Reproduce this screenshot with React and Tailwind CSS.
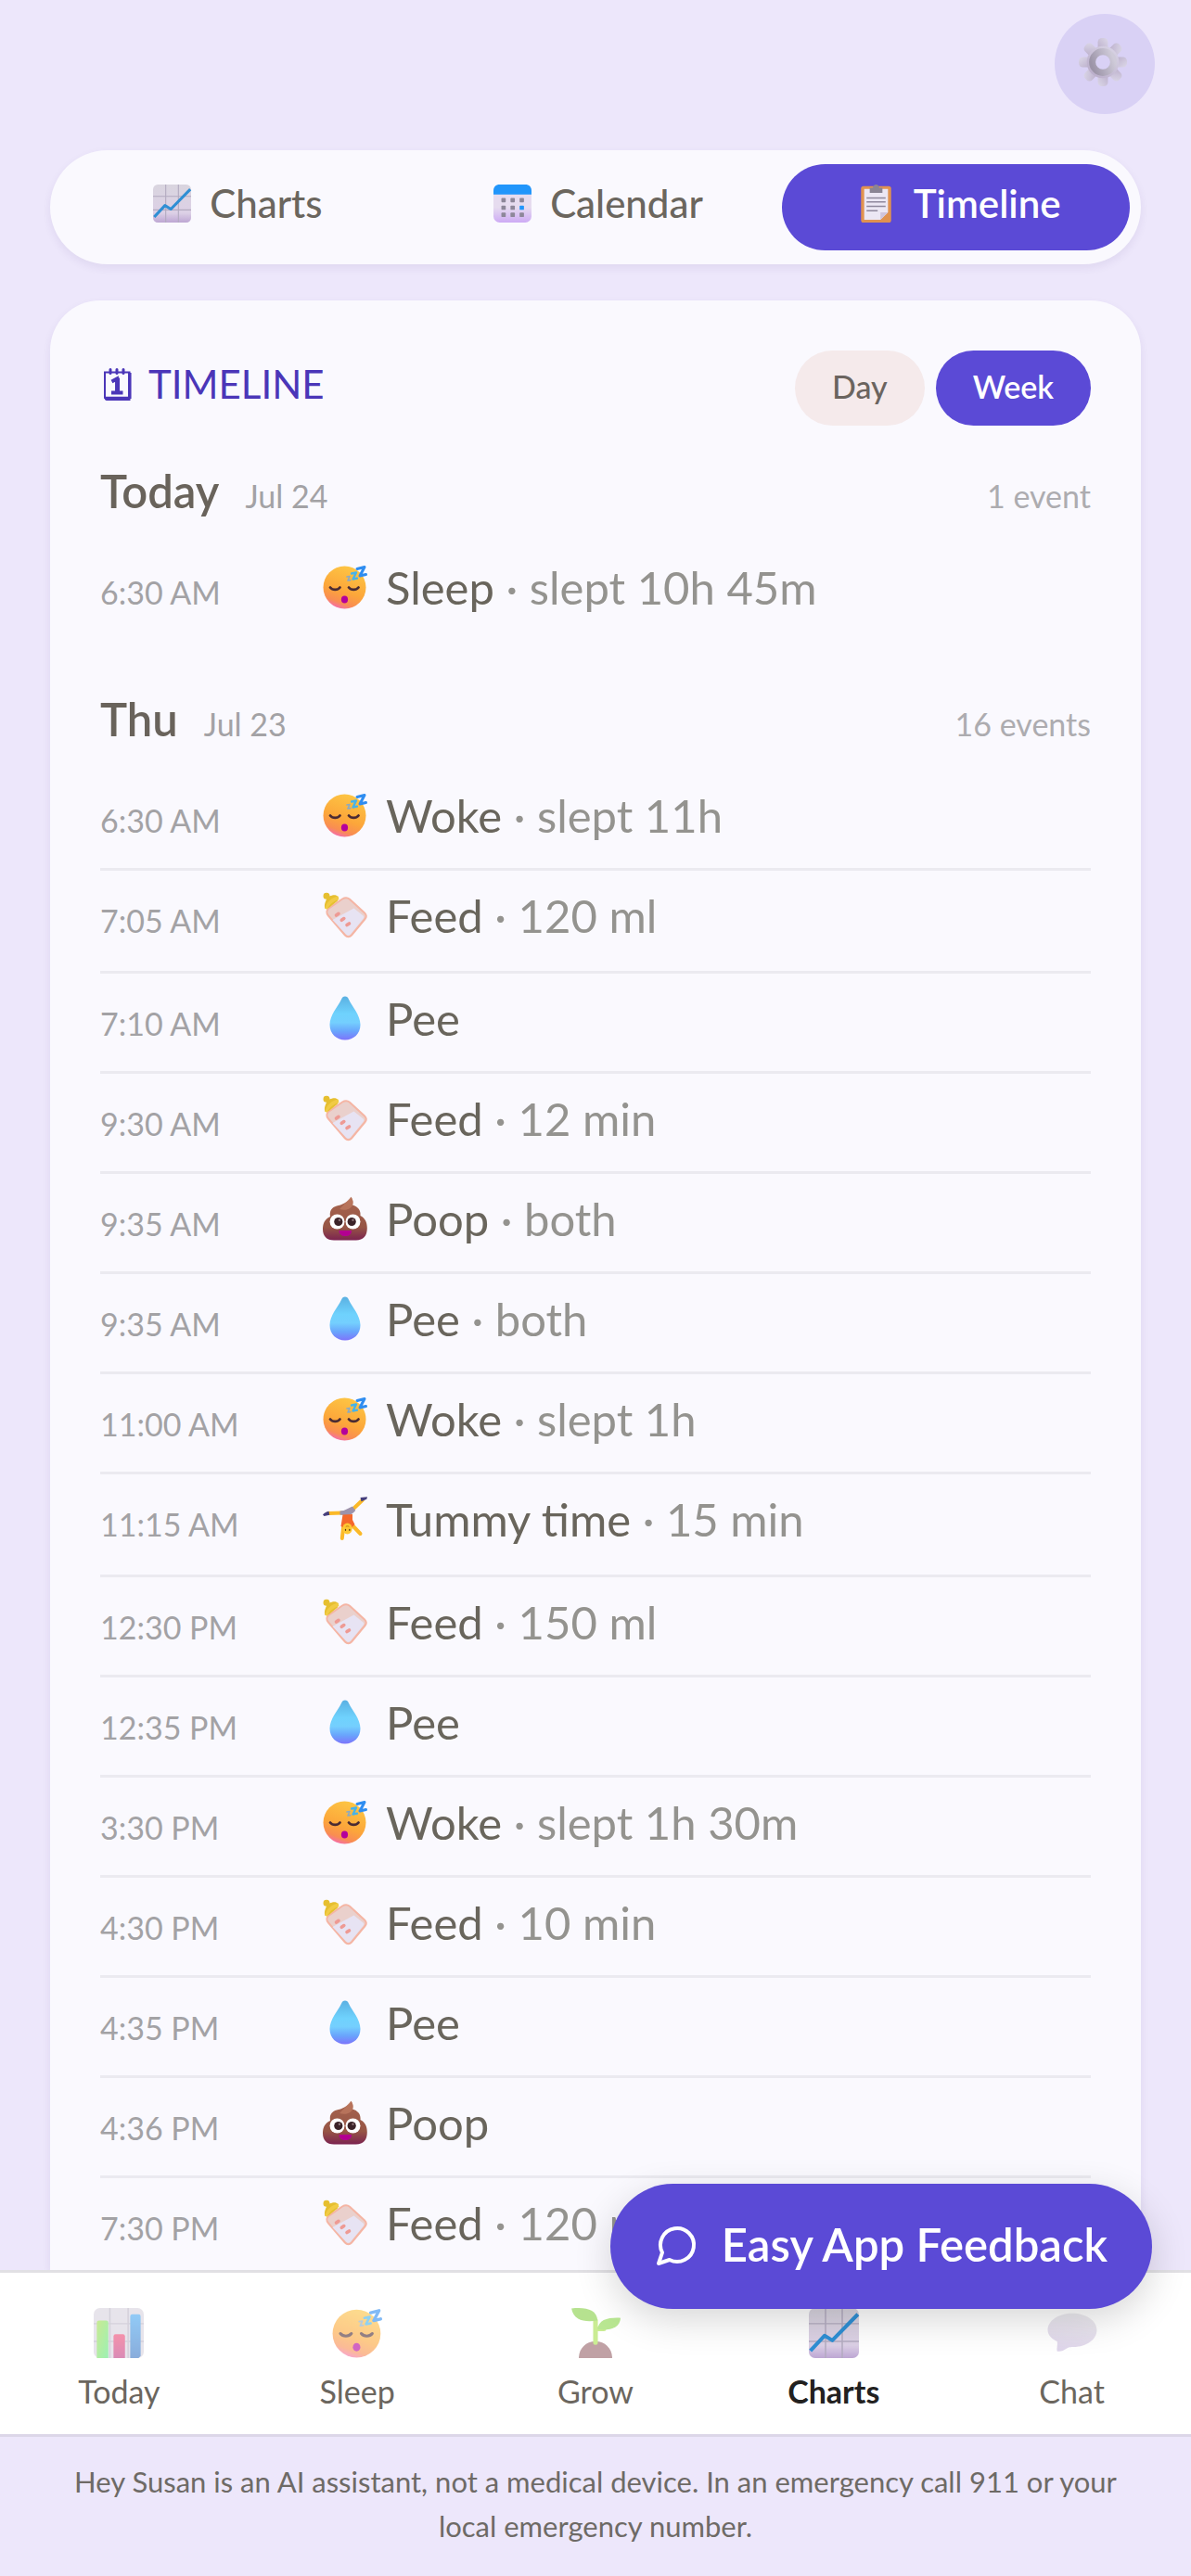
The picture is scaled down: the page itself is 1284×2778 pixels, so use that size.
import React from 'react';

function Gradients() {
  return (
    <svg width="0" height="0" className="absolute" aria-hidden="true">
      <defs>
        <linearGradient id="faceFill" x1="0.7" y1="0" x2="0.35" y2="1">
          <stop offset="0" stopColor="#fdc744" />
          <stop offset="0.6" stopColor="#fca63a" />
          <stop offset="0.85" stopColor="#f98d52" />
          <stop offset="1" stopColor="#f56bb0" />
        </linearGradient>
        <linearGradient id="dropFill" x1="0.5" y1="0" x2="0.5" y2="1">
          <stop offset="0" stopColor="#5ab0e2" />
          <stop offset="0.4" stopColor="#6fd2fd" />
          <stop offset="0.6" stopColor="#74cffe" />
          <stop offset="0.8" stopColor="#69a5fc" />
          <stop offset="1" stopColor="#7d74fb" />
        </linearGradient>
        <linearGradient id="poopFill" x1="0.5" y1="0" x2="0.5" y2="1">
          <stop offset="0" stopColor="#a8654f" />
          <stop offset="0.7" stopColor="#965545" />
          <stop offset="1" stopColor="#7c2350" />
        </linearGradient>
        <linearGradient id="paperFill" x1="0" y1="0" x2="0" y2="1">
          <stop offset="0" stopColor="#d9d5df" />
          <stop offset="0.75" stopColor="#dcd0e6" />
          <stop offset="1" stopColor="#bda6d3" />
        </linearGradient>
        <linearGradient id="calFill" x1="0" y1="0" x2="0" y2="1">
          <stop offset="0.6" stopColor="#e6dcef" />
          <stop offset="1" stopColor="#cdaaf5" />
        </linearGradient>
        <linearGradient id="gearFill" x1="1" y1="0" x2="0.2" y2="1">
          <stop offset="0" stopColor="#dcd8e8" />
          <stop offset="1" stopColor="#b9acc9" />
        </linearGradient>
        <linearGradient id="gearRing" x1="1" y1="0.3" x2="0" y2="0.7">
          <stop offset="0" stopColor="#cfcbd9" />
          <stop offset="1" stopColor="#9c94a8" />
        </linearGradient>
        <linearGradient id="greenBar" x1="0" y1="0" x2="1" y2="1">
          <stop offset="0" stopColor="#a5dd4c" />
          <stop offset="1" stopColor="#5ce882" />
        </linearGradient>
        <linearGradient id="pinkBar" x1="0" y1="0" x2="0" y2="1">
          <stop offset="0" stopColor="#ee4a74" />
          <stop offset="1" stopColor="#c23f86" />
        </linearGradient>
        <linearGradient id="blueBar" x1="0" y1="0" x2="0" y2="1">
          <stop offset="0" stopColor="#4aa9f2" />
          <stop offset="1" stopColor="#3b76c4" />
        </linearGradient>
        <linearGradient id="bubbleFill" x1="0.6" y1="0" x2="0.4" y2="1">
          <stop offset="0" stopColor="#e2dfe6" />
          <stop offset="1" stopColor="#cbbbdf" />
        </linearGradient>
      </defs>
    </svg>
  );
}

const art = {
  sleep: (
    <>
      <circle cx="23.500" cy="24.500" r="23" fill="url(#faceFill)" />
      <path d="M8 24.500c2.500 3.200 8 3.200 10.500 0M28 24.500c2.500 3.200 8 3.200 10.500 0" fill="none" stroke="#4a2b33" strokeWidth="2.800" strokeLinecap="round" />
      <ellipse cx="23.500" cy="37.500" rx="3.600" ry="4" fill="#b4009c" />
      <path d="M37 4.500l8-2-5 9.500 6.500-1.500" fill="none" stroke="#2f8df0" strokeWidth="3" strokeLinecap="round" strokeLinejoin="round" />
      <path d="M31 9.500l5-1-3.500 7 4.500-.8" fill="none" stroke="#45b3ea" strokeWidth="2.300" strokeLinecap="round" strokeLinejoin="round" />
      <path d="M26 13l3-.5-2 4.500 2.800-.4" fill="none" stroke="#8aa9c4" strokeWidth="1.600" strokeLinecap="round" strokeLinejoin="round" />
    </>
  ),
  feed: (
    <>
      <path d="M6 17L21 6.500c3-1.800 5.500-1.800 8 .3L45 21.500c2 2 2.200 4.500.5 6.500L31 45.500c-2 2.300-5 2.300-7 0L6 24.500c-2.500-3-2.500-5 0-7.500z" fill="#ead0cc" stroke="#f5b5a4" strokeWidth="2" />
      <path d="M10.500 29L33.500 16.500l10 8c1 1 1 2.200 0 3.500L30 44.500c-1.500 1.800-3.500 1.800-5 0z" fill="#e7e3f3" />
      <path d="M2.500 17C1 13 3 9 4 6.800A3.500 3.500 0 1 1 7.500 3.500C10 2.500 14 1 17 4.500l-1 4L6 16.500z" fill="#e6bf30" />
      <path d="M2.500 16.500C4 10 9 5 16.500 3.500l1 3.500C11 9 7 12.500 4.500 18z" fill="#f1cb45" />
      <path d="M14.500 24l2.500-1.700M20.300 29.300l2.500-1.700M26 34.600l2.500-1.700" stroke="#ee9a94" strokeWidth="3.600" strokeLinecap="round" />
    </>
  ),
  pee: <path d="M24 .5c2 0 3 1.200 4 3.200 3.500 7.500 12.500 17 12.500 27.300 0 9.700-7.200 16.500-16.500 16.500S7.500 40.700 7.500 31C7.500 20.700 16.500 11.200 20 3.700 21 1.700 22 .5 24 .5z" fill="url(#dropFill)" />,
  poop: (
    <>
      <path d="M30.500.8c2 3 2.600 6 1.600 8.700 6 2 9 5.500 8.400 11.500 5 2.500 7.300 7 7.300 13.500 0 8-4 13-12 13H12C4 47.500 0 43 0 35.500c0-6.500 2.500-11 8-13.500-1-6 1.500-10 7-11.500C20 9.500 27 7 30.500.8z" fill="url(#poopFill)" />
      <path d="M30.500.8c2 3 2.600 6 1.600 8.700-2 4.500-8 6.500-14 4.500" fill="#c07c62" opacity=".7" />
      <path d="M17.500 37h13.500c0 4-2.500 6-6.700 6s-6.800-2-6.800-6z" fill="#b30090" />
      <circle cx="15.500" cy="27.500" r="8" fill="#fff" />
      <circle cx="32.500" cy="27.500" r="8" fill="#fff" />
      <circle cx="16.800" cy="27.500" r="4.600" fill="#3b2328" />
      <circle cx="31.200" cy="27.500" r="4.600" fill="#3b2328" />
      <circle cx="18" cy="25.800" r="1.200" fill="#8c7478" />
      <circle cx="32.500" cy="25.800" r="1.200" fill="#8c7478" />
    </>
  ),
  tummy: (
    <>
      <path d="M22 17.500L6 18M32 14L43 3.500" stroke="#fbb928" strokeWidth="4" strokeLinecap="round" />
      <path d="M0 19.500c2-2 4-3.500 6.500-3.700l.8 4L1.500 21zM40.500 1l7.500-.7-.7 2.500-5.800 2.400z" fill="#463f7c" />
      <path d="M18.500 15.500c6 0 9-3.500 13.500-5l3.300 4.500c-3 3-6 5.500-9.300 5.500l-7.500-1z" fill="#9d93ab" />
      <path d="M22.500 30l-1.700 15" stroke="#fbb928" strokeWidth="4" strokeLinecap="round" />
      <path d="M31 30l9.500 10" stroke="#fbb928" strokeWidth="4" strokeLinecap="round" />
      <path d="M21.500 19.500l10.500-.5v6l2.500 5-3.500 3.500h-8.500l-3-1.500z" fill="#f5682b" />
      <ellipse cx="26.500" cy="34.500" rx="5.200" ry="6" fill="#fdc733" />
      <path d="M24.500 35.500v.8M28.800 35.500v.8" stroke="#5a3a10" strokeWidth="1.300" strokeLinecap="round" />
      <path d="M24.800 32.500c1-.9 2.500-.9 3.500 0" stroke="#c07a10" strokeWidth="1" fill="none" />
    </>
  ),
  line: (
    <>
      <rect width="48" height="48" rx="6" fill="url(#paperFill)" />
      <path d="M16 0v48M32 0v48M0 15h48M0 32h48" stroke="#b3abc0" strokeWidth="1.300" />
      <path d="M1.500 41L15 26.500l7.500 4.500L47 6" fill="none" stroke="#2f8fd4" strokeWidth="3.600" strokeLinejoin="round" />
    </>
  ),
  calendar: (
    <>
      <rect width="48" height="48" rx="8" fill="url(#calFill)" />
      <path d="M0 12.500V8c0-5 3-8 8-8h32c5 0 8 3 8 8v4.500z" fill="#2196fb" />
      {[17, 26.5, 35.5].map((y) =>
        [10, 21.5, 33].map((x) => (
          <rect key={x + '-' + y} x={x} y={y} width="5.500" height="5.500" rx="1" fill={x === 33 && y === 26.5 ? '#2196fb' : '#8d8799'} />
        ))
      )}
    </>
  ),
  clipboard: (
    <>
      <rect x="5" y="2" width="38" height="46" rx="3" fill="#e09250" />
      <path d="M9 5.500h30V35l-9.500 9.500H9z" fill="#ece7f4" />
      <path d="M39 35h-9.500v9.500z" fill="#cfc4dd" />
      <path d="M12 17h24M12 22h24M12 27.500h24M12 33h14" stroke="#8f889c" strokeWidth="1.800" />
      <path d="M16 4h4c0-5.500 8-5.500 8 0h4v6.500H16z" fill="#8a8494" />
    </>
  ),
  bars: (
    <>
      <rect width="48" height="48" rx="6" fill="#d8d3de" />
      <path d="M15.500 0v48M33 0v48M0 15h48M0 32h48" stroke="#b9b3c3" strokeWidth="1.300" />
      <path d="M3 48V14a2 2 0 0 1 2-2h7a2 2 0 0 1 2 2v34z" fill="url(#greenBar)" />
      <path d="M19 48V27a2 2 0 0 1 2-2h7a2 2 0 0 1 2 2v21z" fill="url(#pinkBar)" />
      <path d="M35 48V8a2 2 0 0 1 2-2h6a2 2 0 0 1 2 2v38l-2 2z" fill="url(#blueBar)" />
    </>
  ),
  grow: (
    <>
      <path d="M8 48c0-9 6.500-16 16-16s16 7 16 16z" fill="#97646a" />
      <path d="M24 33V12M24 20h8" stroke="#a8e04c" strokeWidth="4.500" strokeLinecap="round" fill="none" />
      <path d="M1 .5c14-1.500 24 1 25 11.500C15 14 3 12.500 1 .5z" fill="#86cf45" />
      <path d="M26 20.500C27 11 36 9 48 9.500 47.500 19 38 22 26 20.500z" fill="#8bd84a" />
    </>
  ),
  chat: <path d="M24 5c13 0 23.500 7 23.500 16S38 37 25 37.300c-4 0-5 .5-8.500 2.700-2 1.300-4.500 1.500-7 1.500-.8-3 .8-6 0-9.500C4.500 29.500.5 26 .5 21 .5 12 11 5 24 5z" fill="url(#bubbleFill)" />,
  gear: (
    <>
      {[0, 45, 90, 135, 180, 225, 270, 315].map((a) => (
        <rect key={a} x="19" y="0" width="10" height="16" rx="4" fill="url(#gearFill)" transform={`rotate(${a} 24 24)`} />
      ))}
      <circle cx="24" cy="24" r="16" fill="url(#gearFill)" />
      <circle cx="24" cy="24" r="10.500" fill="#d9d1f5" stroke="url(#gearRing)" strokeWidth="6.500" />
    </>
  ),
};

function Art({ name, className }) {
  return (
    <svg viewBox="0 0 48 48" className={className} aria-hidden="true" overflow="visible">
      {art[name]}
    </svg>
  );
}

const days = [
  {
    name: 'Today',
    date: 'Jul 24',
    count: '1 event',
    events: [['6:30 AM', 'sleep', 'Sleep', 'slept 10h 45m']],
  },
  {
    name: 'Thu',
    date: 'Jul 23',
    count: '16 events',
    events: [
      ['6:30 AM', 'sleep', 'Woke', 'slept 11h'],
      ['7:05 AM', 'feed', 'Feed', '120 ml'],
      ['7:10 AM', 'pee', 'Pee'],
      ['9:30 AM', 'feed', 'Feed', '12 min'],
      ['9:35 AM', 'poop', 'Poop', 'both'],
      ['9:35 AM', 'pee', 'Pee', 'both'],
      ['11:00 AM', 'sleep', 'Woke', 'slept 1h'],
      ['11:15 AM', 'tummy', 'Tummy time', '15 min'],
      ['12:30 PM', 'feed', 'Feed', '150 ml'],
      ['12:35 PM', 'pee', 'Pee'],
      ['3:30 PM', 'sleep', 'Woke', 'slept 1h 30m'],
      ['4:30 PM', 'feed', 'Feed', '10 min'],
      ['4:35 PM', 'pee', 'Pee'],
      ['4:36 PM', 'poop', 'Poop'],
      ['7:30 PM', 'feed', 'Feed', '120 ml'],
    ],
  },
];

const views = [
  ['line', 'Charts'],
  ['calendar', 'Calendar'],
  ['clipboard', 'Timeline'],
];

const navItems = [
  ['bars', 'Today'],
  ['sleep', 'Sleep'],
  ['grow', 'Grow'],
  ['line', 'Charts'],
  ['chat', 'Chat'],
];

function Day({ day }) {
  return (
    <section>
      <header className="flex items-baseline gap-7 leading-10">
        <h3 className="text-[49px] leading-[60px] font-semibold text-[#69635b]">{day.name}</h3>
        <span className="text-[34px] text-[#a3a2a5]">{day.date}</span>
        <span className="ml-auto text-[34px] text-[#adacb0]">{day.count}</span>
      </header>
      <ul className="mt-[26px]">
        {day.events.map(([time, icon, label, detail], i) => (
          <li
            key={i}
            className="flex items-baseline border-b-3 border-[#ebeaf0] pt-[18px] pb-[27px] nth-2:pb-[30px] nth-8:pb-[30px] last:border-b-0 last:pb-5"
          >
            <time className="w-60 shrink-0 text-[34px] leading-10 text-[#a3a2a5]">{time}</time>
            <Art name={icon} className="mr-5 size-12 shrink-0 self-center" />
            <p className="text-[49px] leading-[60px] text-[#69655c]">
              {label}
              {detail && <span className="text-[#94938f]"> · {detail}</span>}
            </p>
          </li>
        ))}
      </ul>
    </section>
  );
}

export default function App() {
  return (
    <div className="flex min-h-screen flex-col bg-[#ede7fb] font-['Lato',sans-serif]">
      <Gradients />
      <header className="flex justify-end px-[39px] pt-[15px]">
        <button aria-label="Settings" className="flex size-27 items-center justify-center rounded-full bg-[#d9d1f5]">
          <Art name="gear" className="mr-1 mb-1 size-[52px]" />
        </button>
      </header>

      <main className="mt-[39px] flex grow flex-col gap-[39px] px-[54px]">
        <div role="tablist" className="grid grid-cols-3 gap-3.5 rounded-full bg-[#faf9fe] px-3 py-[15px] shadow-[0_4px_10px_rgba(60,40,120,0.08)]">
          {views.map(([icon, label]) => {
            const active = label === 'Timeline';
            return (
              <button
                key={label}
                role="tab"
                aria-selected={active}
                className={
                  active
                    ? 'flex h-[93px] items-center justify-center gap-5 rounded-full bg-[#5b4ad6] pb-2 pl-1.5 text-[42px] font-semibold text-white'
                    : 'flex h-[93px] items-center justify-center gap-5 rounded-full pb-2 pl-1.5 text-[42px] font-medium text-[#6b665e]'
                }
              >
                <Art name={icon} className="size-[41px]" />
                {label}
              </button>
            );
          })}
        </div>

        <section className="grow rounded-t-[54px] bg-[#faf9fe] px-[54px] pt-[54px] shadow-[0_4px_10px_rgba(60,40,120,0.08)]">
          <div className="mb-10 flex items-center justify-between">
            <h2 className="flex items-center gap-4 pb-2 text-[42px] text-[#4b36b8]">
              <svg viewBox="0 0 36 36" className="size-9" fill="none" stroke="currentColor" aria-hidden="true">
                <path d="M5 4.500h26.500V34H7l-2-2z" strokeWidth="2" />
                <path d="M5 32.500h27M31.800 5v28" strokeWidth="3.500" />
                <path d="M11 1.500v4M18 1.500v4M25 1.500v4" strokeWidth="3" strokeLinecap="round" />
                <path d="M12.500 14.500l5.500-3v14M12 26.500h12.500" strokeWidth="3.800" />
                <path d="M18.800 10.500v16" strokeWidth="4.500" />
              </svg>
              TIMELINE
            </h2>
            <div className="flex gap-3">
              <button className="h-[81px] rounded-full bg-[#f5eaeb] px-10 pb-1 text-[34px] font-medium text-[#6b645f]">Day</button>
              <button className="h-[81px] rounded-full bg-[#5b4ad6] px-10 pb-1 text-[34px] font-semibold text-white">Week</button>
            </div>
          </div>
          <div className="flex flex-col gap-[62px]">
            {days.map((day) => (
              <Day key={day.name} day={day} />
            ))}
          </div>
        </section>
      </main>

      <nav className="relative grid grid-cols-5 border-y-3 border-t-[#e1e0e4] border-b-[#dcd6e8] bg-white">
        {navItems.map(([icon, label]) => {
          const active = label === 'Charts';
          return (
            <a
              key={label}
              href="#"
              aria-current={active ? 'page' : undefined}
              className={
                active
                  ? 'flex flex-col items-center gap-3 pt-[38px] pb-[22px] text-[34px] leading-[48px] font-bold text-[#22211f]'
                  : 'flex flex-col items-center gap-3 pt-[38px] pb-[22px] text-[34px] leading-[48px] text-[#6b665e]'
              }
            >
              <Art name={icon} className={active ? 'size-[54px]' : 'size-[54px] opacity-60'} />
              {label}
            </a>
          );
        })}
      </nav>
      <footer className="px-[72px] pt-6 pb-[30px] text-center text-[31px] leading-[48px] text-[#6e6a66]">
        Hey Susan is an AI assistant, not a medical device. In an emergency call 911 or your local emergency number.
      </footer>

      <button className="fixed right-[42px] bottom-[288px] flex h-[135px] items-center gap-6 rounded-full bg-[#5b4ad6] px-12 pb-1 text-[49px] font-semibold text-white shadow-[0_12px_40px_rgba(0,0,0,0.16)]">
        <svg viewBox="0 0 24 24" className="size-12" fill="none" stroke="currentColor" strokeWidth="2" strokeLinecap="round" strokeLinejoin="round" aria-hidden="true">
          <path d="M7.900 20A9 9 0 1 0 4 16.100L2 22Z" />
        </svg>
        Easy App Feedback
      </button>
    </div>
  );
}
